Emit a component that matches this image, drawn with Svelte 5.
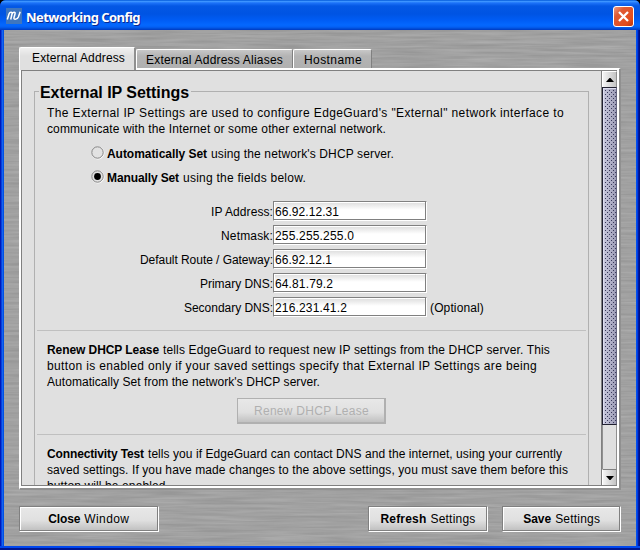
<script>
  const fields = [
    { label: 'IP Address:', lw: 62, value: '66.92.12.31', vw: 64 },
    { label: 'Netmask:', lw: 52, value: '255.255.255.0', vw: 79 },
    { label: 'Default Route / Gateway:', lw: 133, value: '66.92.12.1', vw: 57 },
    { label: 'Primary DNS:', lw: 73, value: '64.81.79.2', vw: 58 },
    { label: 'Secondary DNS:', lw: 89, value: '216.231.41.2', vw: 72, note: '(Optional)' }
  ];

  // Spreads a run of text to a given pixel width through its letter spacing.
  function fit(node, width) {
    const natural = node.getBoundingClientRect().width;
    const gaps = node.textContent.length;
    node.style.letterSpacing = (width - natural) / gaps + 'px';
  }
</script>

{#snippet run(text, width)}<span class="run" use:fit={width}>{text}</span>{/snippet}
{#snippet bold(text, width)}<b class="run" use:fit={width}>{text}</b>{/snippet}

<div class="window">
  <header class="titlebar">
    <svg class="logo" width="16" height="16" viewBox="0 0 16 16">
      <rect width="16" height="16" fill="#3f76be" />
      <path d="M1.3 11.5 L3 6 Q3.6 4.2 5 4.2 Q6.4 4.2 6 6 L4.7 11.5 M6 6 Q6.7 4.2 8.1 4.2 Q9.5 4.2 9 6 L8 9.5 Q7.5 11.3 9.3 11.3 Q11.5 11.3 12.4 9 L14.2 3.8" fill="none" stroke="#fff" stroke-width="1.5" />
    </svg>
    <h1>{@render run('Networking Config', 114)}</h1>
    <button class="x" aria-label="Close">
      <svg width="21" height="21" viewBox="0 0 21 21">
        <defs>
          <linearGradient id="red" x1="0" y1="0" x2="1" y2="1">
            <stop offset="0" stop-color="#f0a088" /><stop offset=".3" stop-color="#e05a34" />
            <stop offset=".75" stop-color="#e34c1c" /><stop offset="1" stop-color="#b83208" />
          </linearGradient>
        </defs>
        <rect x=".5" y=".5" width="20" height="20" rx="2.5" fill="url(#red)" stroke="#fff" />
        <path d="M6 6 L15 15 M15 6 L6 15" stroke="#fff" stroke-width="2.3" />
      </svg>
    </button>
  </header>

  <main class="body">
    <svg class="brushed" width="632" height="516" aria-hidden="true">
      <filter id="brush" x="0" y="0" width="100%" height="100%" color-interpolation-filters="sRGB">
        <feTurbulence type="fractalNoise" baseFrequency="0.016 0.36" numOctaves="3" seed="8" />
        <feColorMatrix values=".13 0 0 0 .565  .13 0 0 0 .565  .13 0 0 0 .565  0 0 0 0 1" />
      </filter>
      <rect width="632" height="516" filter="url(#brush)" />
    </svg>

    <nav class="tabs">
      <div class="tab active">{@render run('External Address', 93)}</div>
      <div class="tab second">{@render run('External Address Aliases', 137)}</div>
      <div class="tab third">{@render run('Hostname', 58)}</div>
    </nav>

    <section class="panel">
      <div class="view">
        <div class="group">
          <h2>{@render run('External IP Settings', 149)}</h2>
          <div class="line first">{@render run(`The External IP Settings are used to configure EdgeGuard's "External" network interface to`, 517)}</div>
          <div class="line">{@render run('communicate with the Internet or some other external network.', 339)}</div>

          <div class="choices">
            <div class="choice">
              <svg width="14" height="14" viewBox="0 0 14 14">
                <circle cx="7" cy="7" r="6" fill="none" stroke="#fff" />
                <circle cx="6.5" cy="6.5" r="5.7" fill="#e2e2e2" stroke="#848484" />
              </svg>
              {@render bold('Automatically Set', 100)}{@render run(`using the network's DHCP server.`, 183)}
            </div>
            <div class="choice">
              <svg width="14" height="14" viewBox="0 0 14 14">
                <circle cx="7" cy="7" r="6" fill="none" stroke="#fff" />
                <circle cx="6.5" cy="6.5" r="5.7" fill="#e2e2e2" stroke="#848484" />
                <circle cx="6.5" cy="6.5" r="3.4" fill="#000" />
              </svg>
              {@render bold('Manually Set', 72)}{@render run('using the fields below.', 123)}
            </div>
          </div>

          <div class="fields">
            {#each fields as f}
              <div class="field">
                <div class="label">{@render run(f.label, f.lw)}</div>
                <div class="input">{@render run(f.value, f.vw)}</div>
                {#if f.note}<div class="note">{@render run(f.note, 54)}</div>{/if}
              </div>
            {/each}
          </div>

          <hr />
          <div class="para">
            <div class="line split">{@render bold('Renew DHCP Lease', 112)}{@render run('tells EdgeGuard to request new IP settings from the DHCP server. This', 387)}</div>
            <div class="line">{@render run('button is enabled only if your saved settings specify that External IP Settings are being', 490)}</div>
            <div class="line">{@render run(`Automatically Set from the network's DHCP server.`, 273)}</div>
          </div>
          <button class="btn renew" disabled>{@render run('Renew DHCP Lease', 115)}</button>

          <hr />
          <div class="para">
            <div class="line split">{@render bold('Connectivity Test', 97)}{@render run('tells you if EdgeGuard can contact DNS and the internet, using your currently', 414)}</div>
            <div class="line">{@render run('saved settings. If you have made changes to the above settings, you must save them before this', 521)}</div>
            <div class="line">{@render run('button will be enabled.', 122)}</div>
          </div>
        </div>
      </div>

      <div class="scroll">
        <div class="arrow"><svg width="8" height="4" viewBox="0 0 8 4"><path d="M0 4 L3.5 0 L4.5 0 L8 4Z" /></svg></div>
        <div class="thumb"></div>
        <div class="track"></div>
        <div class="arrow down"><svg width="8" height="4" viewBox="0 0 8 4"><path d="M0 0 L8 0 L4.5 4 L3.5 4Z" /></svg></div>
      </div>
    </section>

    <footer>
      <button class="btn close">{@render bold('Close', 32)}{@render run('Window', 45)}</button>
      <button class="btn refresh">{@render bold('Refresh', 46)}{@render run('Settings', 45)}</button>
      <button class="btn save">{@render bold('Save', 28)}{@render run('Settings', 45)}</button>
    </footer>
  </main>
</div>

<style>
  :global(body) { background: #000; overflow: hidden; }
  * { box-sizing: border-box; }
  .window {
    width: 640px; height: 550px; display: flex; flex-direction: column;
    font: 12px/16px "Liberation Sans", Arial, sans-serif; color: #000;
    background: linear-gradient(90deg, #0018b8 0 1px, #0840dc 1px 2px, #1464f0 2px 3px, #0050e4 3px 636px, #0050f0 636px 637px, #003ce0 637px 638px, #0018a0 638px 639px, #001080 639px);
    border-radius: 6px 6px 0 0; overflow: hidden;
    padding: 0 4px 4px; position: relative;
  }
  .window::after { content: ""; position: absolute; left: 0; right: 0; bottom: 0; height: 4px; background: linear-gradient(#0048f0 0 50%, #001690 50%); }
  .titlebar {
    flex: none; height: 30px; margin: 0 -4px; padding: 0 6px; display: flex; align-items: center;
    background: linear-gradient(#0058d8 0, #3c94ff 1.5px, #1c72f8 3px, #0458e4 6px, #0054e3 14px, #005cf4 20px, #0468fe 25px, #0460f4 27px, #0048d0 29px, #0038c0 30px);
  }
  .logo { display: block; margin-top: 2px; }
  h1 { margin: 3px 0 0 4px; font: bold 13px/18px "Noto Sans", "Open Sans", sans-serif; color: #fff; text-shadow: 1px 1px 0 #0a2a90; }
  .x { margin: 3px 0 0 auto; padding: 0; border: 0; background: none; height: 21px; }
  .x svg { display: block; }
  .run { white-space: pre; display: inline-block; flex: none; }
  .body { position: relative; flex: 1; min-height: 0; padding: 17px 15px 0; display: flex; flex-direction: column; background: #a0a0a0; }
  .brushed { position: absolute; left: 0; top: 0; }
  .tabs { position: relative; z-index: 1; display: flex; align-items: flex-end; height: 21px; }
  .tab { height: 19px; border: 1px solid; border-color: #fff #808080 transparent #fff; border-bottom: 0; background: linear-gradient(#c8c8c8, #b4b4b4 6px, #b0b0b0); border-radius: 2px 2px 0 0; padding: 3px 0 0 9px; line-height: 15px; }
  .tab.active { width: 117px; height: 23px; margin-bottom: -2px; background: linear-gradient(#f0f0f0, #e0e0e0 8px); padding: 2px 0 0 12px; line-height: 17px; border-right: 2px solid #909090; }
  .second { width: 157px; }
  .third { width: 79px; padding-left: 10px; }
  .panel { position: relative; width: 602px; height: 422px; flex: none; display: flex; background: #fff; border: solid; border-width: 1px 2px 2px 1px; border-color: #fff #909090 #909090 #fff; padding: 1px 2px 2px 1px; }
  .view { width: 580px; height: 416px; border: solid #808080; border-width: 1px 0 1px 1px; overflow: hidden; padding: 20px 0 0 12px; background: #e0e0e0; }
  .group { width: 555px; height: 420px; border: 1px solid #b0b0b0; padding: 0 2px; }
  h2 { width: 152px; height: 20px; margin: -9px 0 0 2px; padding-left: 1px; background: #e0e0e0; font: bold 16px/20px "Liberation Sans", Arial, sans-serif; display: flex; }
  .line { height: 16px; margin-left: 10px; display: flex; }
  .line.first { margin-top: 2px; }
  .split { gap: 4px; }
  .choices { padding-top: 1px; }
  .choice { display: flex; gap: 4px; height: 16px; margin: 8px 0 0 54px; }
  .choice svg { margin: 0 -1px 0 0; flex: none; }
  .choice b { margin-left: -1px; }
  .fields { padding-top: 15px; height: 144px; }
  .field { display: flex; height: 24px; }
  .label { width: 236px; display: flex; justify-content: flex-end; padding-top: 3px; }
  .input { width: 154px; height: 20px; border: 1px solid #808080; border-right-color: #fff; border-bottom-color: #fff; box-shadow: inset -1px -1px #808080, inset 1px 1px #fff; background: linear-gradient(#dcdcdc, #fff 8px); padding: 2px 0 0 1px; }
  .note { padding: 3px 0 0 3px; }
  hr { border: 0; height: 1px; background: #c0c0c0; margin: 0; }
  .para { padding-top: 11px; }
  .btn { font: inherit; color: #000; height: 26px; display: flex; gap: 4px; align-items: center; justify-content: center; padding: 0; border: 1px solid #808080; border-right-color: #fff; border-bottom-color: #fff; box-shadow: inset -1px -1px #808080, inset 1px 1px #fff; background: linear-gradient(#e8e8e8, #e0e0e0 55%, #bebebe); }
  .renew { width: 149px; margin: 8px 0 10px 200px; color: #b0b0b0; border-color: #b0b0b0; box-shadow: inset -1px -1px #b0b0b0; }
  .scroll { width: 16px; height: 416px; background: #e0e0e0; border: 1px solid #808080; border-right: 0; display: flex; flex-direction: column; }
  .arrow { height: 16px; flex: none; display: flex; align-items: center; justify-content: center; border-top: 1px solid #fff; border-left: 1px solid #fff; border-right: 1px solid #909090; background: linear-gradient(90deg, #f4f4f4, #c4c4c4); }
  .down { border-top: 1px solid #808080; }
  .thumb { height: 338px; flex: none; border: 1px solid #202030; border-right-color: #666680; box-shadow: inset 1px 1px #ddddf0; background: radial-gradient(circle at 1.5px 1.5px, #38385a .55px, transparent .75px) 3px 3px / 4px 4px, radial-gradient(circle at 1.5px 1.5px, #38385a .55px, transparent .75px) 1px 1px / 4px 4px, linear-gradient(90deg, #cacade, #9c9cb6); }
  .track { flex: 1; background: #e0e0e0; border: 1px solid #909090; border-top: 0; border-bottom: 0; }
  footer { position: relative; display: flex; padding-top: 16px; }
  .close { width: 140px; }
  .refresh { width: 121px; margin-left: 209px; }
  .save { width: 119px; margin-left: 14px; }
</style>
